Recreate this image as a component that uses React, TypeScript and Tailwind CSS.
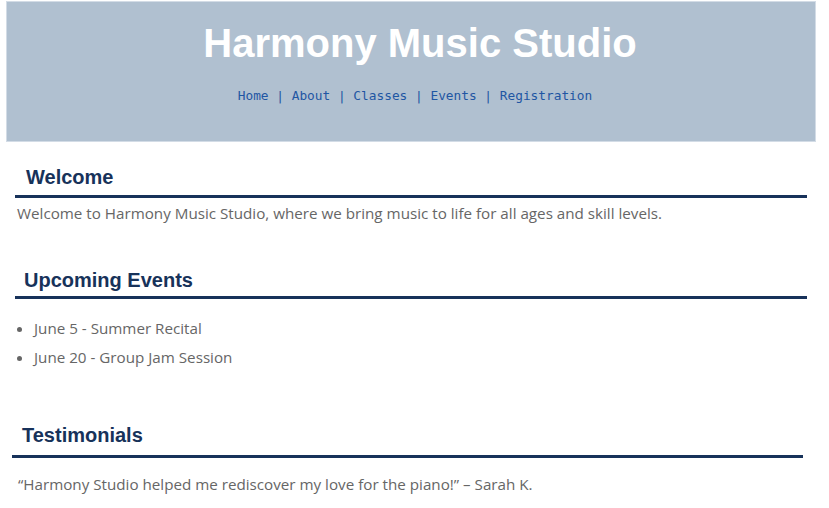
export default function App() {
  const links = ["Home", "About", "Classes", "Events", "Registration"];

  return (
    <div className="min-h-screen bg-white pt-px font-['Open_Sans',sans-serif] text-[#666666]">
      {/* Header */}
      <header className="ml-[6px] flex h-[141px] w-[810px] flex-col items-center border border-[#d3dce6] bg-[#b0c0d0] pl-[8px] pt-[18px]">
        <h1 className="pl-[10px] font-['Liberation_Sans',Arial,sans-serif] text-[40px] font-bold leading-[46px] text-white">
          Harmony Music Studio
        </h1>
        <nav className="mt-[20px] font-['DejaVu_Sans_Mono',monospace] text-[12.8px] leading-[20px] text-[#1f56a3]">
          {links.map((l, i) => (
            <span key={l}>
              {i > 0 && <span> | </span>}
              <a href="#">{l}</a>
            </span>
          ))}
        </nav>
      </header>

      {/* Welcome */}
      <section className="ml-[15px] w-[792px]">
        <h2 className="mt-[23px] border-b-[3px] border-[#17325a] pb-[6px] pl-[11px] font-['Liberation_Sans',Arial,sans-serif] text-[20px] font-bold leading-[24px] text-[#17325a]">
          Welcome
        </h2>
        <p className="mt-[3px] pl-[2px] text-[15.2px] leading-[24px]">
          Welcome to Harmony Music Studio, where we bring music to life for all ages and skill levels.
        </p>
      </section>

      {/* Upcoming Events */}
      <section className="ml-[15px] w-[792px]">
        <h2 className="mt-[43px] border-b-[3px] border-[#17325a] pb-[4px] pl-[9px] font-['Liberation_Sans',Arial,sans-serif] text-[20px] font-bold leading-[24px] text-[#17325a]">
          Upcoming Events
        </h2>
        <ul className="mt-[17px] list-disc pl-[19px] text-[15.2px] leading-[24px]">
          <li className="mb-[5px]">June 5 - Summer Recital</li>
          <li>June 20 - Group Jam Session</li>
        </ul>
      </section>

      {/* Testimonials */}
      <section className="ml-[12px] w-[791px]">
        <h2 className="mt-[54px] border-b-[3px] border-[#17325a] pb-[8px] pl-[10px] font-['Liberation_Sans',Arial,sans-serif] text-[20px] font-bold leading-[24px] text-[#17325a]">
          Testimonials
        </h2>
        <p className="mt-[14px] pl-[6px] text-[15.2px] leading-[24px]">
          “Harmony Studio helped me rediscover my love for the piano!” – Sarah K.
        </p>
      </section>
    </div>
  );
}
